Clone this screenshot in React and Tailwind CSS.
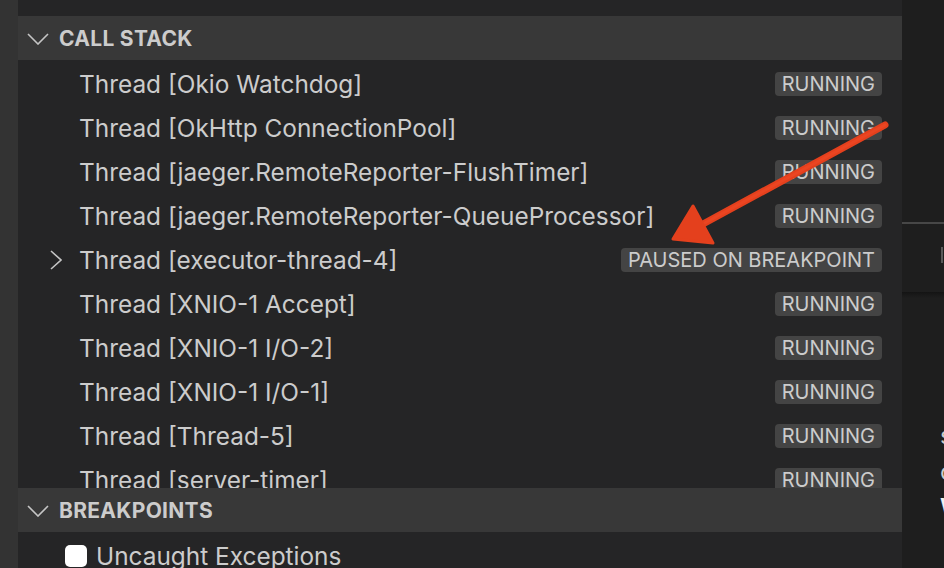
import React from "react";

const threads = [
  { name: "Thread [Okio Watchdog]", state: "RUNNING" },
  { name: "Thread [OkHttp ConnectionPool]", state: "RUNNING" },
  { name: "Thread [jaeger.RemoteReporter-FlushTimer]", state: "RUNNING" },
  { name: "Thread [jaeger.RemoteReporter-QueueProcessor]", state: "RUNNING" },
  { name: "Thread [executor-thread-4]", state: "PAUSED ON BREAKPOINT", expandable: true },
  { name: "Thread [XNIO-1 Accept]", state: "RUNNING" },
  { name: "Thread [XNIO-1 I/O-2]", state: "RUNNING" },
  { name: "Thread [XNIO-1 I/O-1]", state: "RUNNING" },
  { name: "Thread [Thread-5]", state: "RUNNING" },
  { name: "Thread [server-timer]", state: "RUNNING" },
];

function ChevronDown() {
  return (
    <svg width="22" height="12" viewBox="0 0 22 12" className="shrink-0">
      <polyline points="1,1 11,11 21,1" fill="none" stroke="#c5c5c5" strokeWidth="1.6" />
    </svg>
  );
}

function ChevronRight() {
  return (
    <svg width="12" height="20" viewBox="0 0 12 20" className="shrink-0">
      <polyline points="1,1 11,10 1,19" fill="none" stroke="#c5c5c5" strokeWidth="1.6" />
    </svg>
  );
}

function SectionHeader({ title }) {
  return (
    <div className="h-[44px] shrink-0 bg-[#383838] flex items-center pl-[9px] pt-[2px] gap-[10px]">
      <ChevronDown />
      <span className="text-[21px] font-bold text-[#cccccc] tracking-[0.3px]">{title}</span>
    </div>
  );
}

export default function App() {
  return (
    <div className="relative flex w-[944px] h-[568px] overflow-hidden font-['Inter',sans-serif] text-[#cccccc]">
      <div className="w-[18px] shrink-0 bg-[#333333]" />
      <div className="w-[884px] shrink-0 bg-[#252526] flex flex-col">
        <div className="h-4 shrink-0" />
        <SectionHeader title="CALL STACK" />
        <div className="h-[428px] shrink-0 overflow-hidden flex flex-col">
          {threads.map((t) => (
            <div key={t.name} className="h-[44px] shrink-0 flex items-center pt-[4px] pr-[20px]">
              <div className="w-[61px] shrink-0 flex justify-end pr-[17px]">
                {t.expandable ? <ChevronRight /> : null}
              </div>
              <span className="text-[24.4px] leading-[30px] text-[#cccccc] whitespace-nowrap">{t.name}</span>
              <div className="flex-1" />
              <span className="h-6 px-[7px] rounded-[4px] bg-[#444444] text-[20px] leading-[24px] text-[#cccccc] whitespace-nowrap">
                {t.state}
              </span>
            </div>
          ))}
        </div>
        <SectionHeader title="BREAKPOINTS" />
        <div className="h-[44px] shrink-0 flex items-center pt-[4px] pl-[47px] gap-[9px]">
          <div className="w-[22px] h-[22px] rounded-[5px] bg-white" />
          <span className="text-[24.4px] leading-[30px] text-[#cccccc] whitespace-nowrap">Uncaught Exceptions</span>
        </div>
      </div>
      <div className="flex-1 bg-[#1e1e1e] flex flex-col overflow-hidden">
        <div className="h-[222px] shrink-0" />
        <div className="h-[2px] shrink-0 bg-[#474747]" />
        <div className="h-[68px] shrink-0 flex items-center justify-end">
          <div className="w-[2px] h-[16px] bg-[#5a5a5a] mr-[1px] mt-[-6px]" />
        </div>
        <div className="h-[6px] shrink-0 bg-gradient-to-b from-[#141414] to-[#1e1e1e]" />
        <div className="flex flex-col pl-[38px] pt-[124px] gap-[8px] text-[24px] leading-[28px] text-[#cccccc] whitespace-nowrap">
          <span>s</span>
          <span>c</span>
          <span className="text-[#f0f0f0] font-semibold">W</span>
        </div>
      </div>
      <svg className="absolute left-0 top-0 pointer-events-none" width="944" height="568" viewBox="0 0 944 568">
        <path d="M885 125 L703 224" stroke="#e4401d" strokeWidth="7" strokeLinecap="round" fill="none" />
        <path d="M885 125 L703 224" stroke="#f04a26" strokeWidth="3" strokeLinecap="round" fill="none" opacity="0.6" />
        <polygon points="693,206 673,239 713,243" fill="#e4401d" stroke="#e4401d" strokeWidth="3" strokeLinejoin="round" />
      </svg>
    </div>
  );
}
